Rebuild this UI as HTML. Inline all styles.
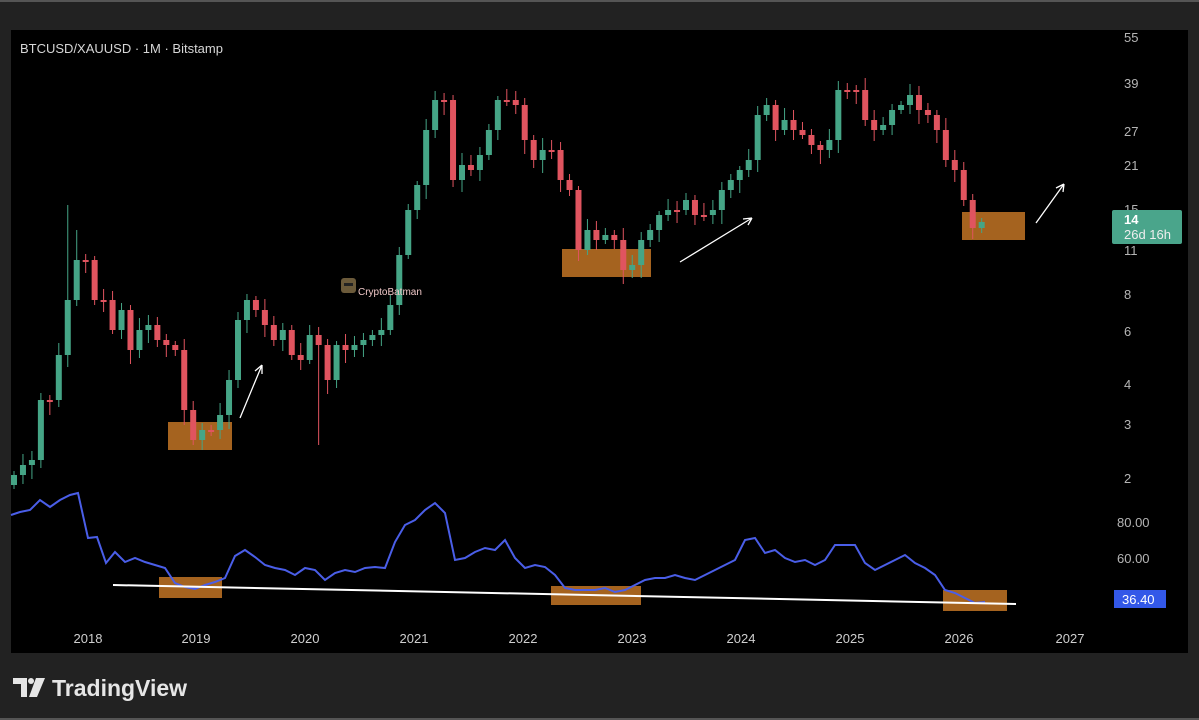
<!DOCTYPE html>
<html><head><meta charset="utf-8"><style>
html,body{margin:0;padding:0;background:#222;width:1199px;height:720px;overflow:hidden;font-family:"Liberation Sans",sans-serif}
svg{position:absolute;left:0;top:0}
</style></head><body>
<svg id="s" width="1199" height="720" xmlns="http://www.w3.org/2000/svg">
<rect x="0" y="0" width="1199" height="720" fill="#222"/>
<rect x="0" y="0" width="1199" height="2" fill="#555"/>
<rect x="0" y="718" width="1199" height="2" fill="#555"/>
<rect x="11" y="30" width="1177" height="623" fill="#000"/>
<g id="boxes" fill="#b36b22" opacity="0.92">
<rect x="168" y="422" width="64" height="28"/>
<rect x="562" y="249" width="89" height="28"/>
<rect x="962" y="212" width="63" height="28"/>
<rect x="159" y="577" width="63" height="21"/>
<rect x="551" y="586" width="90" height="19"/>
<rect x="943" y="590" width="64" height="21"/>
</g>
<g id="candles"></g>
<polyline id="rsi" fill="none" stroke="#4a5ee8" stroke-width="2"/>
<line x1="113" y1="585" x2="1016" y2="604" stroke="#fff" stroke-width="2"/>
<g stroke="#fff" stroke-width="1.3" fill="none">
<path d="M240 418 L262 365 M262 365 L255 371 M262 365 L262 374"/>
<path d="M680 262 L752 218 M752 218 L743 219 M752 218 L748 225"/>
<path d="M1036 223 L1064 184 M1064 184 L1056 188 M1064 184 L1063 192"/>
</g>
<text x="20" y="53" fill="#d6d6d6" font-size="13">BTCUSD/XAUUSD · 1M · Bitstamp</text>
<g fill="#b5b5b5" font-size="13">
<text x="1124" y="42">55</text><text x="1124" y="88">39</text><text x="1124" y="136">27</text>
<text x="1124" y="170">21</text><text x="1124" y="214">15</text><text x="1124" y="255">11</text>
<text x="1124" y="299">8</text><text x="1124" y="336">6</text><text x="1124" y="389">4</text>
<text x="1124" y="429">3</text><text x="1124" y="483">2</text>
<text x="1117" y="527">80.00</text><text x="1117" y="563">60.00</text>
</g>
<rect x="1112" y="210" width="70" height="34" rx="2" fill="#4aa58b"/>
<text x="1124" y="224" fill="#fff" font-size="13" font-weight="bold">14</text>
<text x="1124" y="239" fill="#eee" font-size="13">26d 16h</text>
<rect x="1114" y="590" width="52" height="18" fill="#3358e8"/>
<text x="1122" y="604" fill="#fff" font-size="13">36.40</text>
<g fill="#cfcfcf" font-size="13" text-anchor="middle">
<text x="88" y="643">2018</text><text x="196" y="643">2019</text><text x="305" y="643">2020</text>
<text x="414" y="643">2021</text><text x="523" y="643">2022</text><text x="632" y="643">2023</text>
<text x="741" y="643">2024</text><text x="850" y="643">2025</text><text x="959" y="643">2026</text>
<text x="1070" y="643">2027</text>
</g>
<rect x="341" y="278" width="15" height="15" rx="3" fill="#6b5a3a"/>
<rect x="344" y="283" width="9" height="3" fill="#222"/>
<text x="358" y="295" fill="#f0c8c8" font-size="10">CryptoBatman</text>
<g fill="#e6e6e6">
<path d="M13 678 H27 V697 H21 V684 H13 Z"/>
<circle cx="31" cy="681" r="3"/>
<path d="M36 678 H45 L37 697 H29 Z"/>
</g>
<text x="52" y="696" fill="#e6e6e6" font-size="23" font-weight="bold">TradingView</text>
</svg>
<script>
var c=[475,465,460,400,400,355,300,260,260,300,300,330,310,350,330,325,340,345,350,410,440,430,430,415,380,320,300,310,325,340,330,355,360,335,345,380,345,350,345,340,335,330,305,255,210,185,130,100,100,180,165,170,155,130,100,100,105,140,160,150,150,180,190,250,230,240,235,240,270,265,240,230,215,210,210,200,215,215,210,190,180,170,160,115,105,130,120,130,135,145,150,140,90,90,90,120,130,125,110,105,95,110,115,130,160,170,200,228,222];
var g=document.getElementById('candles'),h='',prev=485;
for(var i=0;i<c.length;i++){var x=14+i*8.96,o=prev,cl=c[i],up=cl<o;var t=Math.min(o,cl),b=Math.max(o,cl);if(b-t<2)b=t+2;
var hi=t-4-(i*7%9),lo=b+4+(i*5%11);if(i==6)hi=205;if(i==7)hi=230;if(i==34)lo=445;if(i==19)lo=425;
var col=up?'#45a586':'#e0545f';
h+='<line x1="'+x+'" x2="'+x+'" y1="'+hi+'" y2="'+lo+'" stroke="'+col+'" stroke-width="1"/><rect x="'+(x-3)+'" y="'+t+'" width="6" height="'+(b-t)+'" fill="'+col+'"/>';prev=cl;}
g.innerHTML=h;
var r=[11,515,20,512,30,510,40,500,50,507,60,500,70,495,78,493,88,538,97,537,106,563,115,552,125,562,135,558,145,562,155,565,165,568,175,583,185,587,195,589,205,585,215,582,225,578,235,556,245,550,255,557,265,565,275,568,285,570,295,575,305,568,315,570,325,580,335,573,345,570,355,572,365,568,375,567,385,568,395,542,405,525,415,520,425,510,435,503,445,513,455,560,465,558,475,552,485,548,495,550,505,540,515,558,525,568,535,565,545,567,555,575,565,588,575,590,585,590,595,590,605,588,615,592,625,590,635,585,645,580,655,578,665,578,675,575,685,578,695,580,705,575,715,570,725,565,735,560,745,540,755,538,765,553,775,550,785,558,795,562,805,560,815,565,825,560,835,545,845,545,855,545,865,563,875,570,885,565,895,560,905,555,915,563,925,568,935,575,945,590,955,593,965,598,975,603,985,602];
var p=[];for(var j=0;j<r.length;j+=2)p.push(r[j]+','+r[j+1]);
document.getElementById('rsi').setAttribute('points',p.join(' '));
</script>
</body></html>
